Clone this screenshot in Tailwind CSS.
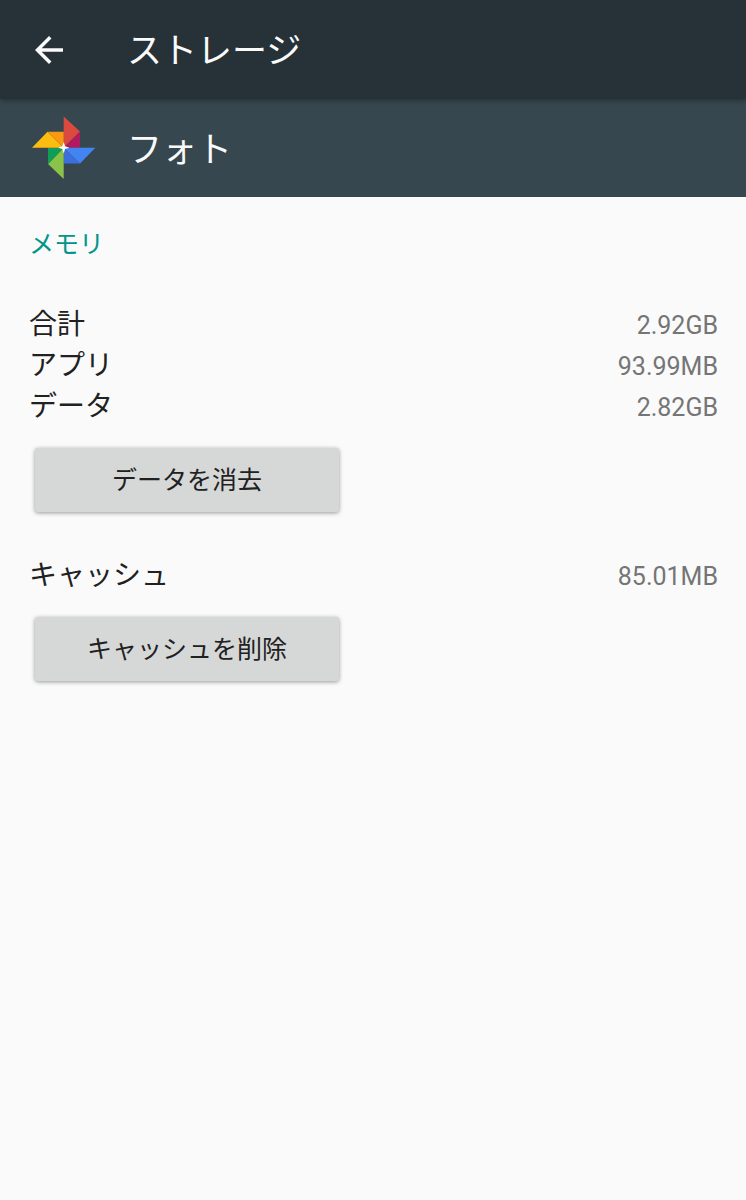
<!DOCTYPE html>
<html lang="ja">
<head>
<meta charset="utf-8">
<meta name="viewport" content="width=device-width, initial-scale=1">
<title>ストレージ</title>
<script src="https://cdn.jsdelivr.net/npm/@tailwindcss/browser@4"></script>
</head>
<body class="min-h-screen bg-[#fafafa] font-['Roboto','Noto_Sans_CJK_JP',sans-serif] text-[#212121]">
<header class="relative flex h-[99px] items-center bg-[#263238] px-7 text-[#fafafa] shadow-[0_2px_5px_rgba(0,0,0,0.3)]">
  <button type="button" aria-label="戻る" class="flex w-[99px] items-center">
    <svg class="size-[42px]" viewBox="0 0 24 24" fill="currentColor" aria-hidden="true"><path d="M20 11H7.830l5.590-5.590L12 4l-8 8 8 8 1.410-1.410L7.830 13H20v-2z"/></svg>
  </button>
  <h1 class="pt-[5px] text-[35px] leading-[48px]">ストレージ</h1>
</header>
<section class="flex h-[98px] items-center bg-[#37474f] px-7 text-[#fafafa]">
  <div class="w-[99px]">
    <svg class="size-[72px]" viewBox="0 0 72 72" aria-hidden="true">
      <path fill="#db4a3f" d="M35.700 4.500L52 19.500 35.700 35.700z"/>
      <path fill="#b01b60" d="M52 19.500v16.200H35.700z"/>
      <path fill="#4384f3" d="M67.300 35.700L52 51.500 35.700 35.700z"/>
      <path fill="#3c6fdc" d="M52 51.500H35.700V35.700z"/>
      <path fill="#8bc34a" d="M35.700 67L20 52l15.700-16.300z"/>
      <path fill="#109d58" d="M20 52V35.700h15.700z"/>
      <path fill="#fdbd10" d="M4 35.700l15.500-16 16.200 16z"/>
      <path fill="#fb9a12" d="M19.500 19.700h16.200v16z"/>
      <path fill="#fff" d="M35.700 30l1.400 4.300 4.300 1.400-4.300 1.400-1.400 4.300-1.400-4.300-4.300-1.400 4.300-1.400z"/>
    </svg>
  </div>
  <h2 class="pt-[5px] text-[35px] leading-[48px]">フォト</h2>
</section>
<main class="pr-7 pl-[29px] pt-7">
  <h3 class="text-[25px] leading-[40px] text-[#009688]">メモリ</h3>
  <dl class="mt-10 text-[28px] leading-[40px]">
    <div class="flex h-[41px] items-baseline justify-between"><dt>合計</dt><dd class="text-[25px] text-[#757575]">2.92GB</dd></div>
    <div class="flex h-[41px] items-baseline justify-between"><dt>アプリ</dt><dd class="text-[25px] text-[#757575]">93.99MB</dd></div>
    <div class="flex h-[41px] items-baseline justify-between"><dt>データ</dt><dd class="text-[25px] text-[#757575]">2.82GB</dd></div>
  </dl>
  <button type="button" class="mx-1.5 mt-5 block h-16 w-[304px] rounded-[3px] bg-[#d6d7d7] pt-0.5 text-[25px] shadow-[0_1px_4px_rgba(0,0,0,0.4)]">データを消去</button>
  <dl class="mt-11 text-[28px] leading-[40px]">
    <div class="flex h-[41px] items-baseline justify-between"><dt>キャッシュ</dt><dd class="text-[25px] text-[#757575]">85.01MB</dd></div>
  </dl>
  <button type="button" class="mx-1.5 mt-5 block h-16 w-[304px] rounded-[3px] bg-[#d6d7d7] pt-0.5 text-[25px] shadow-[0_1px_4px_rgba(0,0,0,0.4)]">キャッシュを削除</button>
</main>
</body>
</html>
